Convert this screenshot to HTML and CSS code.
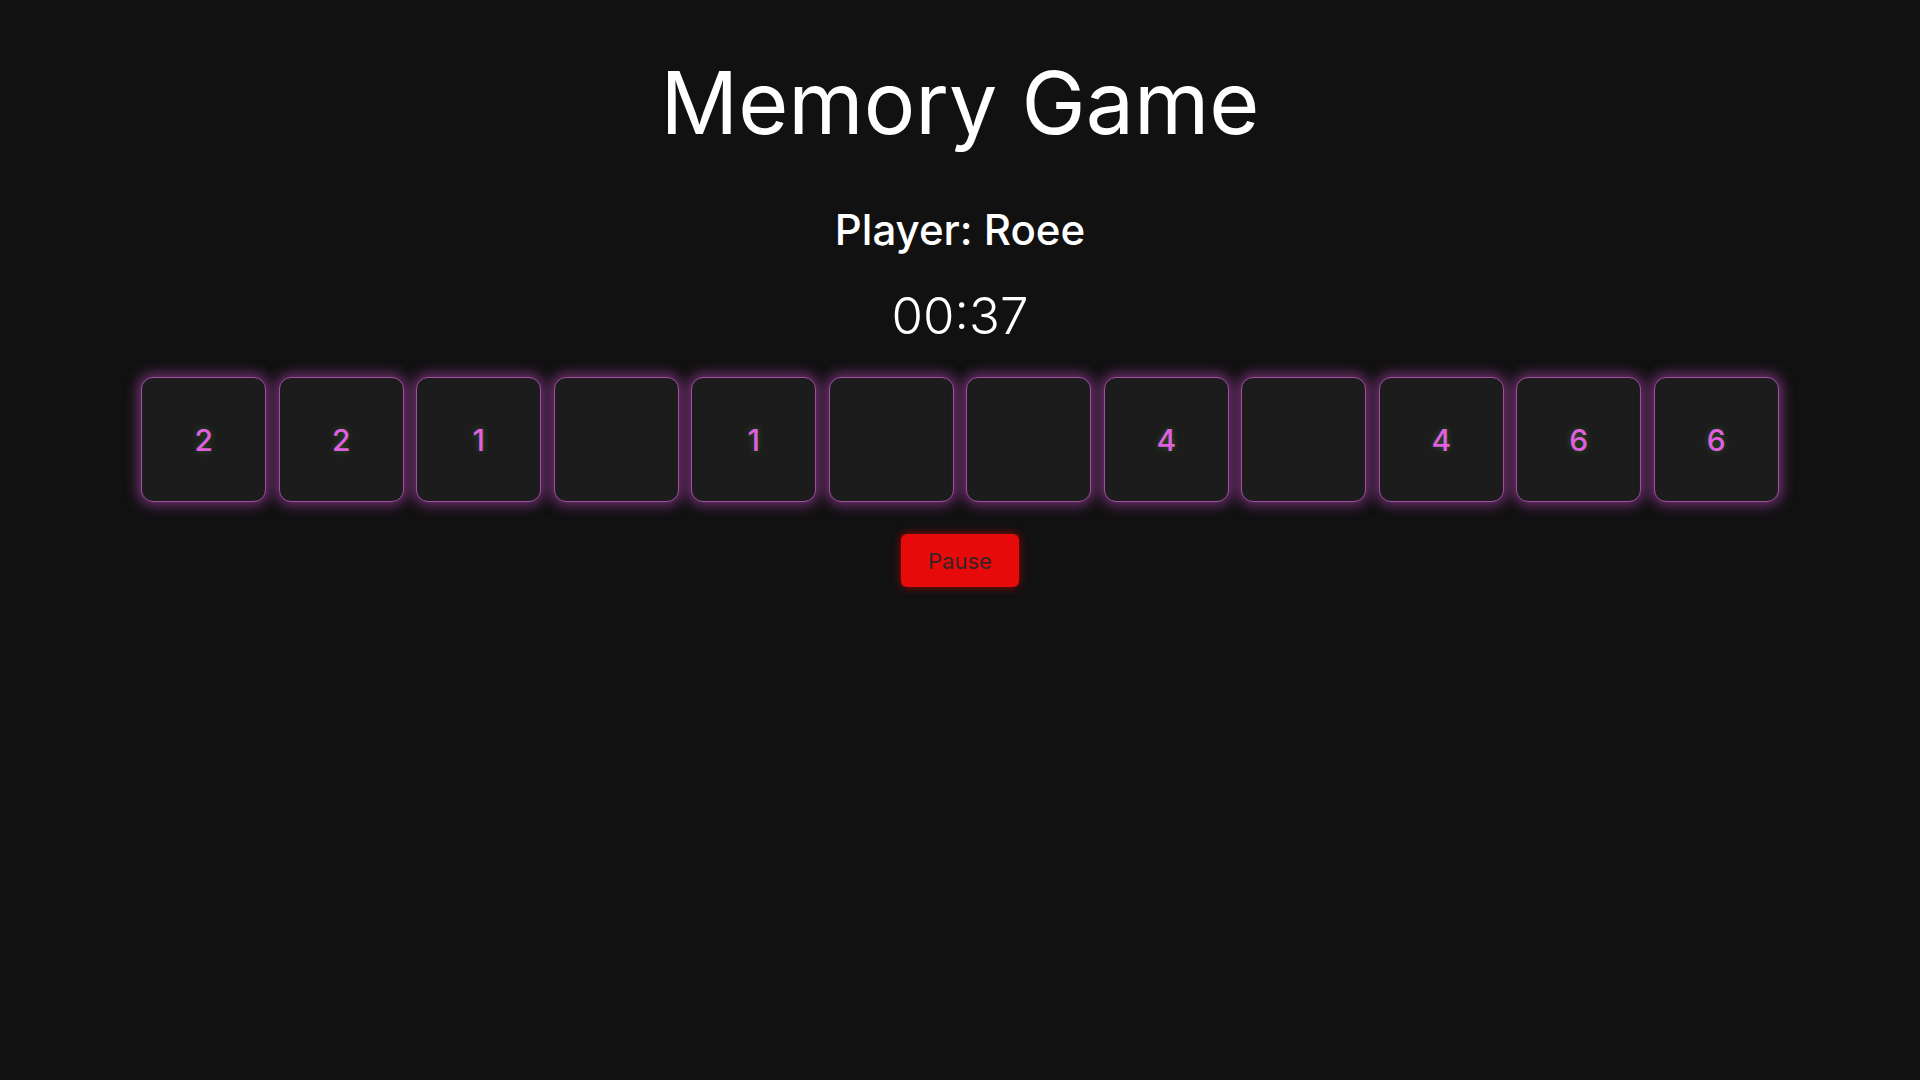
FILE: index.html
```html
<!DOCTYPE html>
<html lang="en">
<head>
<meta charset="utf-8">
<title>Memory Game</title>
<link rel="stylesheet" href="styles.css">
</head>
<body>
<main class="game">
  <h1 class="title">Memory Game</h1>
  <h2 class="player">Player: Roee</h2>
  <div class="timer">00:37</div>
  <div class="board">
    <div class="card">2</div>
    <div class="card">2</div>
    <div class="card">1</div>
    <div class="card"></div>
    <div class="card">1</div>
    <div class="card"></div>
    <div class="card"></div>
    <div class="card">4</div>
    <div class="card"></div>
    <div class="card">4</div>
    <div class="card">6</div>
    <div class="card">6</div>
  </div>
  <button class="pause">Pause</button>
</main>
</body>
</html>
```
FILE: styles.css
```css
html, body {
  margin: 0;
  padding: 0;
  background: #111111;
  height: 100%;
}
body {
  font-family: Inter, "Noto Sans", sans-serif;
  color: #ffffff;
}
.game {
  display: flex;
  flex-direction: column;
  align-items: center;
  padding-top: 60px;
}
.title {
  margin: 0;
  font-size: 86px;
  line-height: 1;
  font-weight: 400;
}
.player {
  margin: 63px 0 0;
  font-size: 42px;
  line-height: 1;
  font-weight: 500;
}
.timer {
  margin-top: 39px;
  font-size: 51px;
  line-height: 1;
  font-weight: 300;
}
.board {
  margin-top: 36px;
  display: flex;
  gap: 12.5px;
}
.card {
  width: 125px;
  height: 125px;
  box-sizing: border-box;
  border-radius: 12px;
  background: #1c1c1c;
  border: 1.5px solid #a050a0;
  box-shadow: 0 0 13px 3px rgba(150, 60, 150, 0.75);
  display: flex;
  align-items: center;
  justify-content: center;
  font-size: 30px;
  font-weight: 500;
  color: #e060e0;
  text-shadow: 0 0 6px rgba(80, 200, 60, 0.35);
}
.pause {
  margin-top: 32px;
  width: 118px;
  height: 53px;
  border: none;
  border-radius: 6px;
  background: #e60a0a;
  color: #3a2222;
  font-family: Inter, "Noto Sans", sans-serif;
  font-size: 22px;
  font-weight: 400;
  box-shadow: 0 0 8px rgba(255, 0, 0, 0.6);
  cursor: pointer;
}
```
